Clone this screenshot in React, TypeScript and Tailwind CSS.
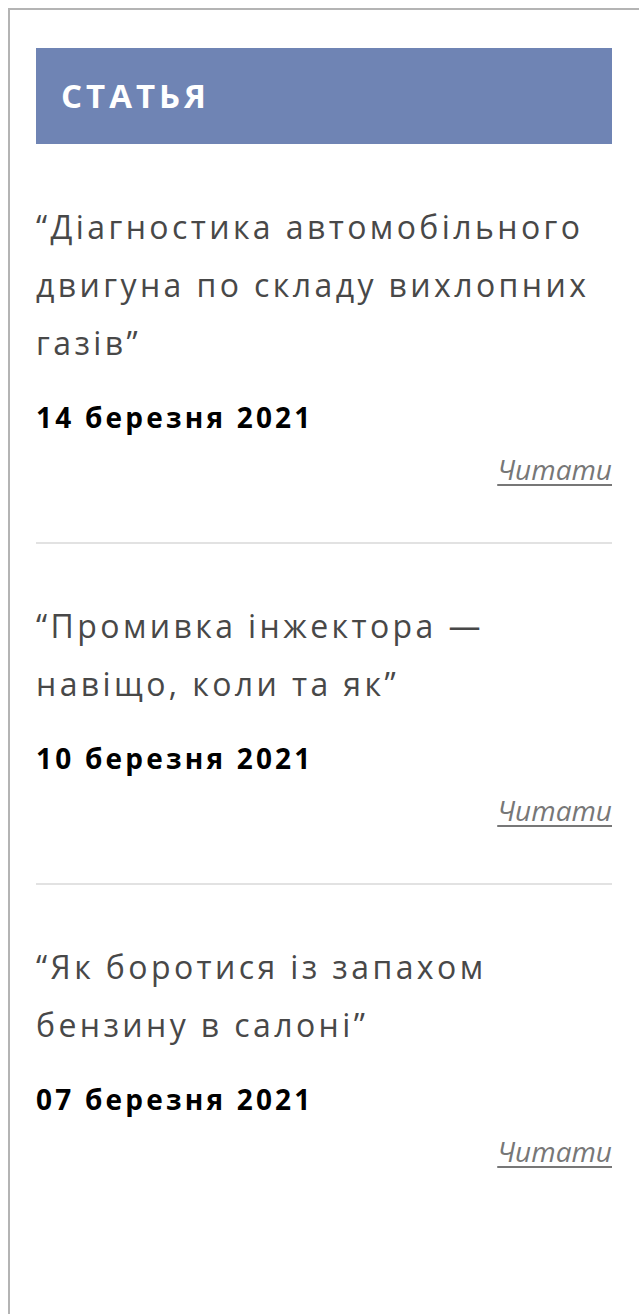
const articles = [
  {
    title: '“Діагностика автомобільного двигуна по складу вихлопних газів”',
    date: '14 березня 2021',
  },
  {
    title: '“Промивка інжектора — навіщо, коли та як”',
    date: '10 березня 2021',
  },
  {
    title: '“Як боротися із запахом бензину в салоні”',
    date: '07 березня 2021',
  },
];

export default function App() {
  return (
    <div className="min-h-screen bg-white pl-2 pt-2 overflow-hidden font-['Open_Sans',sans-serif]">
      <div className="min-h-[1306px] border-l-2 border-t-2 border-[#b4b4b4] pl-[26px] pr-[27px] pt-[38px]">
        {/* Widget heading */}
        <div className="h-24 bg-[#6f84b4] flex items-center pl-[25px]">
          <h2 className="text-white font-bold text-[33px] tracking-[4px]">СТАТЬЯ</h2>
        </div>

        <ul className="pt-[54px]">
          {articles.map((a, i) => (
            <li
              key={a.date}
              className={i < articles.length - 1 ? 'border-b-2 border-[#e2e2e2] pb-[53px] mb-[53px]' : ''}
            >
              <p className="text-[#484848] text-[32px] leading-[58px] tracking-[3.4px]">{a.title}</p>
              <div className="mt-[25px] text-black font-bold text-[28px] leading-[40px] tracking-[3.2px]">{a.date}</div>
              <div className="text-right mt-[12px]">
                <a href="#" className="text-[#777] italic text-[28px] leading-[40px] underline underline-offset-4">
                  Читати
                </a>
              </div>
            </li>
          ))}
        </ul>
      </div>
    </div>
  );
}
